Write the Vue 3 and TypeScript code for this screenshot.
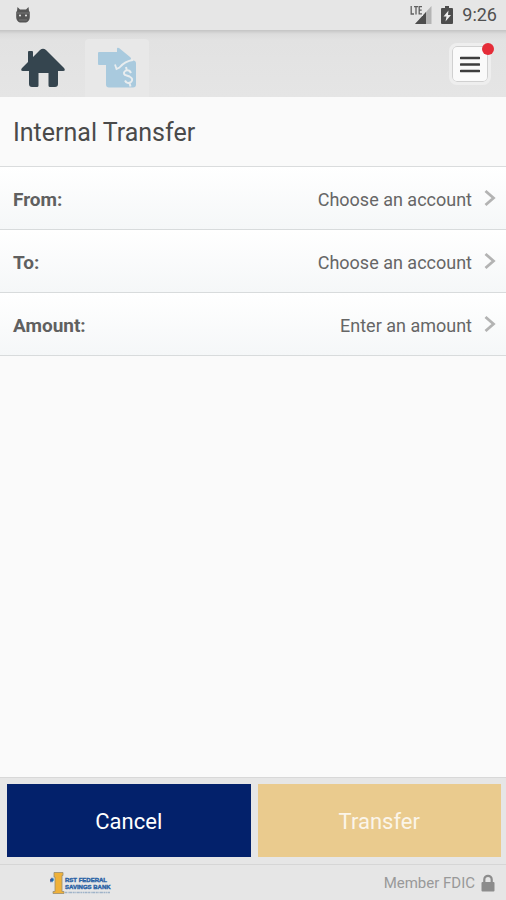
<script setup lang="ts">
import { ref } from 'vue'

interface TransferField {
  label: string
  placeholder: string
}

const time = ref('9:26')

const fields: TransferField[] = [
  { label: 'From:', placeholder: 'Choose an account' },
  { label: 'To:', placeholder: 'Choose an account' },
  { label: 'Amount:', placeholder: 'Enter an amount' },
]
</script>

<template>
  <div class="screen">
    <div class="status">
      <svg class="droid" width="16" height="18" viewBox="0 0 16 18" aria-hidden="true">
        <path d="M2.500 1 5 3.500h6L13.500 1l.5 4 .8 1v5c0 3.500-2.300 5.500-4.800 5.500H6c-2.500 0-4.800-2-4.800-5.500V6L2 5z" fill="#555" />
        <path d="M1 7h14M4 14h8" stroke="#777" stroke-width="1" />
        <circle cx="5" cy="9.500" r="1" fill="#eee" />
        <circle cx="11" cy="9.500" r="1" fill="#eee" />
      </svg>
      <div class="indicators">
        <svg width="22" height="20" viewBox="0 0 22 20" aria-label="LTE signal" role="img">
          <path d="M21.500 1v18H5z" fill="#b4b4b4" />
          <path d="M16 7v12H5z" fill="#4d4d4d" />
          <path d="M0 0h13v11H0z" fill="#e6e6e6" />
          <path d="M1.200 1v8h2.800M4 1.700h4M6 1.700v7.800M12 1.700H9.200v7.100H12M9.200 5.200h2.500" fill="none" stroke="#606060" stroke-width="1.300" />
        </svg>
        <svg width="12" height="18" viewBox="0 0 12 18" aria-label="Battery charging" role="img">
          <path d="M4 0h4v2h3q1 0 1 1v14q0 1-1 1H1q-1 0-1-1V3q0-1 1-1h3z" fill="#4d4d4d" />
          <path d="M7.500 4.500 2.500 10.500h3L4.500 15.500 10 9H7z" fill="#eee" />
        </svg>
        <span class="time">{{ time }}</span>
      </div>
    </div>

    <header class="toolbar">
      <nav class="tabs">
        <button class="tab" type="button" aria-label="Home">
          <svg width="46" height="40" viewBox="0 0 46 40" aria-hidden="true">
            <path d="M8 4q0-1 1-1h3q1 0 1 1v5L20 2q3-2.500 6 0l18 18q2 3-1 3h-5v13q0 3-3 3h-5q-1.500 0-1.500-1.500V25h-10v12.500Q18.500 39 17 39h-5q-3 0-3-3V23H3q-3 0-1-3l6-6z" fill="#35454f" />
          </svg>
        </button>
        <button class="tab active" type="button" aria-label="Transfers">
          <svg width="40" height="42" viewBox="0 0 40 42" aria-hidden="true">
            <path d="M1 6q0-1 1-1h18V2q0-2 2-1l11 9q2 1.500 0 3.500h3q3 0 3 3v21q0 3-3 3H12q-3 0-3-3V18H2q-1 0-1-1z" fill="#a9cade" />
            <path d="M36 13Q28 14 22.500 20.500l-3 1.500-1.500-4.500" fill="none" stroke="#e9edef" stroke-width="1.800" />
            <path d="M34 26q-1.500-3.500-5-2.500-3.500 2-1 4.500l4.500 1.500q4.500 2.500 1.500 5.500-4 2.500-6-1.500M29 20l1 4M32.500 36l1 3.500" fill="none" stroke="#e9edef" stroke-width="2" />
          </svg>
        </button>
      </nav>
      <button class="menu" type="button" aria-label="Menu">
        <svg width="20" height="18" viewBox="0 0 20 18" aria-hidden="true">
          <path d="M1 3h18M1 9.500h18M1 16h18" stroke="#3d3d3d" stroke-width="2.600" stroke-linecap="round" />
        </svg>
        <span class="badge"></span>
      </button>
    </header>

    <main>
      <h1>Internal Transfer</h1>
      <button v-for="field in fields" :key="field.label" class="row" type="button">
        <span class="label">{{ field.label }}</span>
        <span class="value">{{ field.placeholder }}</span>
        <svg width="12" height="18" viewBox="0 0 12 18" aria-hidden="true">
          <path d="M1.500 2 9.500 9l-8 7" fill="none" stroke="#b3b3b3" stroke-width="2.800" />
        </svg>
      </button>
    </main>

    <div class="actions">
      <button class="action cancel" type="button">Cancel</button>
      <button class="action transfer" type="button" disabled>Transfer</button>
    </div>

    <footer>
      <svg class="brand" width="62" height="26" viewBox="0 0 62 26" aria-label="First Federal Savings Bank" role="img">
        <text x="0" y="12" class="hash">#</text>
        <path d="M4 2.500h9v3h-1v16h2v2H3v-2h2V7H4z" fill="#efb13a" stroke="#9a8d70" stroke-width=".8" />
        <text x="15" y="12" class="name">RST FEDERAL</text>
        <text x="15" y="19" class="name">SAVINGS BANK</text>
        <path d="M15 22.500h45" stroke="#9fb3c8" stroke-width="1.400" stroke-dasharray="2 .6 1 .5 3 .6" />
      </svg>
      <div class="member">
        <span>Member FDIC</span>
        <svg width="14" height="18" viewBox="0 0 14 18" aria-hidden="true">
          <path d="M3.300 9V5.500a3.700 3.700 0 0 1 7.400 0V9" fill="none" stroke="#8c8c8c" stroke-width="2.200" />
          <rect x=".5" y="8" width="13" height="9.500" rx="1" fill="#8c8c8c" />
        </svg>
      </div>
    </footer>
  </div>
</template>

<style>
body {
  background: #fafafa;
}
</style>

<style scoped>
.screen {
  display: flex;
  flex-direction: column;
  min-height: 100vh;
  font-family: Roboto, "Liberation Sans", sans-serif;
  color: #555;
}

button {
  margin: 0;
  padding: 0;
  border: 0;
  font: inherit;
  color: inherit;
}

svg {
  display: block;
  flex: none;
}

.status {
  display: flex;
  align-items: center;
  justify-content: space-between;
  box-sizing: border-box;
  height: 30px;
  padding: 0 9px 0 15px;
  background: #e6e6e6;
}

.indicators {
  display: flex;
  align-items: center;
  gap: 9px;
}

.time {
  font-size: 18px;
  line-height: 30px;
  color: #505050;
}

.toolbar {
  display: flex;
  align-items: center;
  justify-content: space-between;
  box-sizing: border-box;
  height: 67px;
  padding: 0 15px 0 5px;
  background: linear-gradient(#c4c4c4, #dcdcdc 4px, #e2e2e2 10px, #e5e5e5);
}

.tabs {
  display: flex;
  align-self: stretch;
  align-items: flex-end;
  gap: 4px;
}

.tab {
  display: flex;
  align-items: center;
  justify-content: center;
  width: 76px;
  height: 58px;
  background: none;
}

.tab.active {
  width: 64px;
  background: #e8e8e8;
  border-radius: 4px 4px 0 0;
}

.menu {
  position: relative;
  display: flex;
  align-items: center;
  justify-content: center;
  width: 42px;
  height: 42px;
  border: 3px solid #eee;
  border-radius: 8px;
  background: #fafafa;
  box-shadow: inset 0 0 0 1px #d0d0d0;
}

.badge {
  position: absolute;
  top: -3px;
  right: -6px;
  width: 12px;
  height: 12px;
  border-radius: 50%;
  background: #e52c38;
}

main {
  flex: 1;
  background: #fafafa;
}

h1 {
  margin: 0;
  padding: 0 13px;
  border-bottom: 1px solid #dadcdd;
  font-size: 25px;
  line-height: 72px;
  height: 69px;
  font-weight: 400;
  color: #4a4a4a;
}

.row {
  display: flex;
  align-items: center;
  box-sizing: border-box;
  width: 100%;
  height: 63px;
  padding: 0 10px 0 13px;
  border-bottom: 1px solid #d8dbdc;
  background: linear-gradient(#fff, #f5f7f8);
  text-align: left;
}

.label {
  flex: 1;
  padding-top: 4px;
  font-size: 19px;
  font-weight: 700;
  line-height: 24px;
  color: #606060;
}

.value {
  margin-right: 12px;
  padding-top: 4px;
  font-size: 18px;
  line-height: 24px;
  color: #666;
}

.actions {
  display: flex;
  gap: 7px;
  padding: 6px 5px 7px 7px;
  border-top: 1px solid #d8d8d8;
  background: #e6e6e6;
}

.action {
  flex: 1;
  height: 73px;
  padding-top: 2px;
  font-size: 22px;
  color: #fff;
}

.cancel {
  background: #03216b;
}

.transfer {
  background: #eacb8e;
  color: #fbf5e9;
}

footer {
  display: flex;
  align-items: center;
  justify-content: space-between;
  box-sizing: border-box;
  height: 36px;
  padding: 0 11px 0 50px;
  border-top: 1px solid #d6d6d6;
  background: #e6e6e6;
}

.hash,
.name {
  font-family: "Liberation Sans", sans-serif;
  font-size: 6px;
  font-weight: 700;
  fill: #2a62a5;
  stroke: #2a62a5;
  stroke-width: 0.4px;
}

.member {
  display: flex;
  align-items: center;
  gap: 6px;
  font-size: 15px;
  line-height: 20px;
  color: #999;
}
</style>
